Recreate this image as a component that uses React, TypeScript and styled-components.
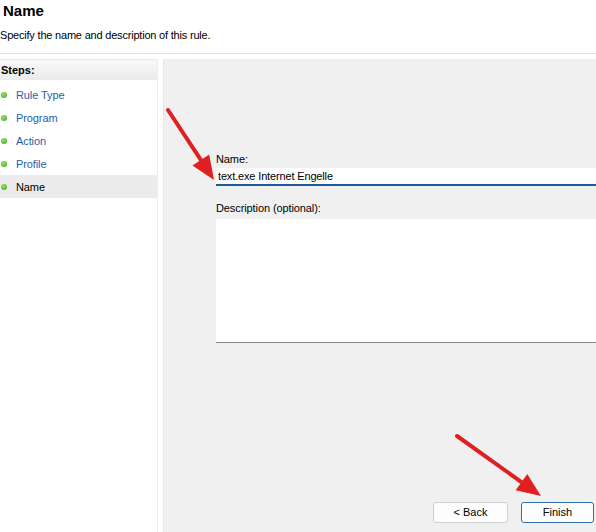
import React from "react";
import styled, { createGlobalStyle } from "styled-components";

const GlobalStyle = createGlobalStyle`
  html, body {
    margin: 0;
    padding: 0;
    background: #ffffff;
  }
  body {
    font-family: "Liberation Sans", Arial, sans-serif;
    font-size: 12px;
    color: #000;
  }
`;

const WindowSc = styled.div`
  position: relative;
  width: 596px;
  height: 532px;
  overflow: hidden;
  display: flex;
  flex-direction: column;
  background: #fff;
`;

const HeaderSc = styled.div`
  height: 54px;
  padding: 2px 0 0 0;
  box-sizing: border-box;
  border-bottom: 1px solid #e3e3e3;
`;

const TitleSc = styled.div`
  font-family: "Liberation Sans", Arial, sans-serif;
  font-weight: bold;
  font-size: 15px;
  padding-left: 3px;
  line-height: 17px;
`;

const SubtitleSc = styled.div`
  margin-top: 9px;
  font-size: 11px;
  line-height: 14px;
  letter-spacing: -0.2px;
  color: #000;
`;

const BodySc = styled.div`
  flex: 1;
  display: flex;
  padding-top: 5px;
  gap: 5px;
`;

const SidebarSc = styled.div`
  width: 157px;
  border-right: 1px solid #ececec;
  background: #fff;
  display: flex;
  flex-direction: column;
`;

const StepsHeadSc = styled.div`
  height: 20px;
  line-height: 20px;
  font-weight: bold;
  font-size: 11px;
  padding-left: 1px;
  background: linear-gradient(#f8f8f8, #ebebeb);
  border-top: 1px solid #e8e8e8;
  margin-bottom: 3px;
`;

const StepSc = styled.div<{ $active?: boolean }>`
  height: 23px;
  display: flex;
  align-items: center;
  gap: 9px;
  padding-left: 1px;
  font-size: 11px;
  letter-spacing: -0.1px;
  color: ${(p) => (p.$active ? "#000" : "#1e5fa8")};
  background: ${(p) => (p.$active ? "#ececec" : "transparent")};
`;

const DotSc = styled.span`
  width: 6px;
  height: 6px;
  border-radius: 50%;
  background: radial-gradient(circle at 40% 35%, #9be36a, #3c9d1c);
`;

const MainSc = styled.div`
  flex: 1;
  background: #f0f0f0;
  border-left: 1px solid #e6e6e6;
  display: flex;
  flex-direction: column;
  padding: 93px 0 0 52px;
`;

const LabelSc = styled.div`
  font-size: 11px;
  line-height: 14px;
  letter-spacing: -0.1px;
  margin-bottom: 2px;
`;

const InputSc = styled.div`
  height: 16px;
  line-height: 16px;
  background: #fff;
  border-bottom: 2px solid #1e5b97;
  padding-left: 2px;
  font-size: 11px;
  letter-spacing: -0.15px;
  margin-bottom: 15px;
`;

const TextAreaSc = styled.div`
  height: 123px;
  background: #fff;
  border-bottom: 1px solid #8a8a8a;
  margin-top: 2px;
`;

const ButtonRowSc = styled.div`
  margin-top: auto;
  display: flex;
  justify-content: flex-end;
  gap: 13px;
  padding: 0 2px 9px 0;
`;

const ButtonSc = styled.div<{ $primary?: boolean }>`
  width: ${(p) => (p.$primary ? "71px" : "73px")};
  height: 19px;
  line-height: 19px;
  text-align: center;
  font-size: 11px;
  background: #fdfdfd;
  border: 1px solid ${(p) => (p.$primary ? "#2f6ea8" : "#d0d0d0")};
  border-radius: 3px;
`;

const ArrowSc = styled.svg`
  position: absolute;
  left: 0;
  top: 0;
  pointer-events: none;
`;

const steps = ["Rule Type", "Program", "Action", "Profile", "Name"];

const Arrow = ({ x1, y1, x2, y2 }: { x1: number; y1: number; x2: number; y2: number }) => {
  const dx = x2 - x1;
  const dy = y2 - y1;
  const len = Math.sqrt(dx * dx + dy * dy);
  const ux = dx / len;
  const uy = dy / len;
  const head = 24;
  const wide = 10;
  const bx = x2 - ux * head;
  const by = y2 - uy * head;
  return (
    <g>
      <line x1={x1} y1={y1} x2={bx} y2={by} stroke="#e02020" strokeWidth={4} strokeLinecap="round" />
      <polygon
        points={`${x2},${y2} ${bx - uy * wide},${by + ux * wide} ${bx + uy * wide},${by - ux * wide}`}
        fill="#e02020"
      />
    </g>
  );
};

export default function App() {
  return (
    <>
      <GlobalStyle />
      <WindowSc>
        <HeaderSc>
          <TitleSc>Name</TitleSc>
          <SubtitleSc>Specify the name and description of this rule.</SubtitleSc>
        </HeaderSc>
        <BodySc>
          <SidebarSc>
            <StepsHeadSc>Steps:</StepsHeadSc>
            {steps.map((s) => (
              <StepSc key={s} $active={s === "Name"}>
                <DotSc />
                {s}
              </StepSc>
            ))}
          </SidebarSc>
          <MainSc>
            <LabelSc>Name:</LabelSc>
            <InputSc>text.exe Internet Engelle</InputSc>
            <LabelSc>Description (optional):</LabelSc>
            <TextAreaSc />
            <ButtonRowSc>
              <ButtonSc>&lt; Back</ButtonSc>
              <ButtonSc $primary>Finish</ButtonSc>
            </ButtonRowSc>
          </MainSc>
        </BodySc>
        <ArrowSc width={596} height={532}>
          <Arrow x1={168} y1={110} x2={214} y2={180} />
          <Arrow x1={457} y1={436} x2={541} y2={496} />
        </ArrowSc>
      </WindowSc>
    </>
  );
}
